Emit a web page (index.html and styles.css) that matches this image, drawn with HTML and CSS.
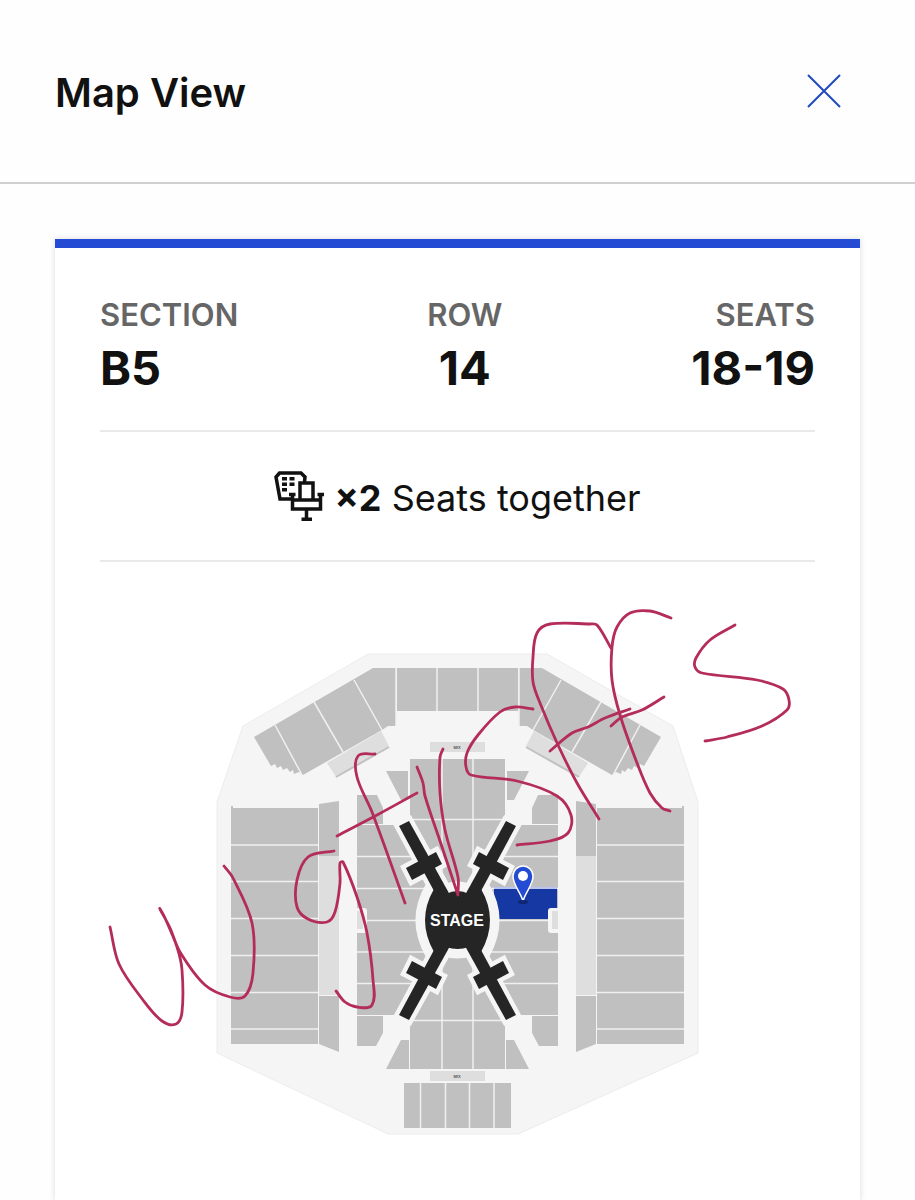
FILE: index.html
```
<!DOCTYPE html>
<html lang="en">
<head>
    <meta charset="utf-8">
    <title>Map View</title>
    <meta name="viewport" content="width=device-width,initial-scale=1">
    <link rel="stylesheet" href="styles.css">
</head>
<body>
    <header class="header">
        <h1>Map View</h1>
        <button class="close" type="button" aria-label="Close">
            <svg width="34" height="34" viewBox="0 0 34 34"><path d="M1 1L33 33M33 1L1 33"/></svg>
        </button>
    </header>
    <main class="main">
        <section class="card">
            <dl class="seat-info">
                <div class="item"><dt>SECTION</dt><dd>B5</dd></div>
                <div class="item center"><dt>ROW</dt><dd>14</dd></div>
                <div class="item right"><dt>SEATS</dt><dd>18-19</dd></div>
            </dl>
            <div class="together">
                <svg class="seat-icon" width="50" height="50" viewBox="0 0 50 50">
                    <path class="line" d="M17 28H6L2 6L5.500 2H27L31 6L30.500 11"/>
                    <path class="line" d="M26 29V12H39V29M18.500 23V38H46.500V23M18.500 29H46.500M32.500 38V49"/>
                    <path class="line" d="M15 23.500H21.500M43.500 23.500H50M27.500 48.300H38"/>
                    <path class="dots" d="M8 6h5v3.500h-5zM15.500 6h5v3.500h-5zM8 11.500h5v3.500h-5zM15.500 11.500h5v3.500h-5zM8 17h5v3.500h-5z"/>
                </svg>
                <span><b>×2</b> Seats together</span>
            </div>
            <svg class="map" viewBox="100 562 715 600">
                <defs>
                    <g id="side">
                        <!-- upper corner stand -->
                        <path class="block" d="M254 737L373 668H396V726H388L382 730L303 775L299 772L294 774L293 770L290 772L287 768L283 770L281 766L277 768L275 764L271 766Z"/>
                        <path class="gap" d="M275 725L302 775M314 702L343 752M354 680L382 730"/>
                        <path class="light" d="M327 763L381 731L389 746L336 777Z"/>
                        <path class="edge" d="M336 777L389 747"/>
                        <!-- side stand -->
                        <path class="block" d="M231 806H233V808H318V1044H231Z"/>
                        <path class="gap" d="M231 845H318M231 881.500H318M231 918.500H318M231 955.500H318M231 992.500H318M231 1029H318"/>
                        <path class="block" d="M319 804L339 801V856H319ZM319 996H339V1052L319 1044Z"/>
                        <path class="light" d="M319 856H339V995H319Z"/>
                        <!-- floor -->
                        <path class="block" d="M357 795H377L383 808V824H357ZM357 825H398L430 882V958L398 1015H357ZM357 1016H383V1033L376 1046H357Z"/>
                        <path class="gap" d="M357 856.500H430M357 888.500H430M357 920.500H430M357 952H430M357 983.500H430"/>
                        <path class="block" d="M386 771H408V800H401ZM401 1040H409V1069H386Z"/>
                    </g>
                    <g id="notch">
                        <path class="floor" d="M356 908H364Q367 908 367 911V930Q367 933 364 933H356Z"/>
                        <path class="light" d="M357 911H363V929H357Z"/>
                    </g>
                    <g id="arm">
                        <path d="M399 826L409 821L450 895L443 903L434 891Z"/>
                        <path d="M436 852L442 864L412 880L406 868Z"/>
                    </g>
                    <g id="arms">
                        <use href="#arm"/>
                        <use href="#arm" transform="translate(915 0) scale(-1 1)"/>
                        <use href="#arm" transform="translate(0 1841) scale(1 -1)"/>
                        <use href="#arm" transform="translate(915 1841) scale(-1 -1)"/>
                    </g>
                    <path id="core" d="M434 889Q416 920 434 952L446 947Q457.500 951 469 947L481 952Q499 920 481 889L469 894Q457.500 888 446 894Z"/>
                </defs>

                <path class="floor outline" d="M368 654H547L673 726L698 802V1053L518 1134H388L217 1053V802L243 726Z"/>
                <use href="#side"/>
                <use href="#side" transform="translate(915 0) scale(-1 1)"/>
                <path class="block" d="M397 668H518V711H397ZM404 1083H511V1128H404Z"/>
                <path class="gap" d="M396 668V726M437 668V711M478 668V711M519 668V726M420.500 1083V1128M445.500 1083V1128M469.500 1083V1128M494 1083V1128"/>
                <path class="block" d="M410 759H505V819L475 885H440L410 819ZM440 956H475L505 1021V1069H410V1021Z"/>
                <path class="gap" d="M442 759V885M473 759V885M410 819.500H505M442 956V1069M473 956V1069M410 1020.500H505"/>
                <path class="light" d="M430 742H485V752H430ZM430 1071H485V1081H430Z"/>
                <text class="mix" x="457" y="749">MIX</text>
                <text class="mix" x="457" y="1078">MIX</text>

                <path class="selected" d="M494 889H557V919H494Z"/>
                <path class="selected-edge" d="M494 888H557"/>
                <use href="#notch"/>
                <use href="#notch" transform="translate(915 0) scale(-1 1)"/>

                <use class="halo" href="#arms"/>
                <use class="halo core" href="#core"/>
                <use class="stage" href="#arms"/>
                <use class="stage" href="#core"/>
                <text class="stage-label" x="457" y="926">STAGE</text>

                <path class="pin" d="M523 901C520 891 513 885 513 876A10 10 0 0 1 533 876C533 885 526 891 523 901Z"/>
                <ellipse class="pin-shadow" cx="523" cy="902" rx="5" ry="2"/>
                <circle class="pin-dot" cx="523" cy="876" r="5"/>

                <g id="ink" class="ink"></g>
            </svg>
        </section>
    </main>
    <script src="ink.js"></script>
</body>
</html>
```
FILE: styles.css
```
*{
    box-sizing: border-box;
}
body{
    margin:0;
    min-height:100vh;
    display:flex;
    flex-direction: column;
    background-color: #fefefe;
    color:#111;
    font-family: Inter, "Open Sans", sans-serif;
}
.header{
    height:184px;
    padding:0 74px 0 55px;
    display:flex;
    align-items: center;
    justify-content: space-between;
    border-bottom:2px solid #d0d0d0;
}
h1{
    margin:0;
    padding-top:4px;
    font-size: 40px;
    line-height: 48px;
    font-weight: 600;
}
.close{
    display:flex;
    padding:0;
    border:none;
    background:none;
    cursor:pointer;
}
.close path{
    stroke:#2049bd;
    stroke-width:2;
}
.main{
    flex:1;
    display:flex;
    flex-direction: column;
    padding:55px 55px 0;
}
.card{
    flex:1;
    padding:0 45px;
    background-color: #fff;
    border-top:9px solid #234bd3;
    box-shadow: 0 0 6px rgba(0,0,0,0.14);
}
.seat-info{
    display:flex;
    justify-content: space-between;
    margin:0;
    padding:48px 0 34px;
    border-bottom:2px solid #e9e9e9;
}
.item{
    display:flex;
    flex-direction: column;
    gap:6px;
}
.center{
    text-align: center;
}
.right{
    text-align: right;
}
dt{
    color:#666;
    font-size: 31px;
    line-height: 38px;
    font-weight: 600;
}
dd{
    margin:0;
    font-size: 47px;
    line-height: 56px;
    font-weight: 700;
}
.together{
    height:130px;
    display:flex;
    align-items: center;
    justify-content: center;
    gap:10px;
    font-size: 36px;
    line-height: 44px;
    border-bottom:2px solid #e9e9e9;
}
.together span{
    padding-top:4px;
}
.seat-icon .line{
    fill:none;
    stroke:#111;
    stroke-width:3.5;
}
.seat-icon .dots{
    fill:#111;
}
.map{
    display:block;
    width:100%;
}
.floor{
    fill:#f5f5f5;
}
.outline{
    stroke:#ececec;
    stroke-width:1;
}
.block{
    fill:#c0c0c0;
}
.light{
    fill:#dedede;
}
.gap{
    fill:none;
    stroke:#f0f0f0;
    stroke-width:1.5;
}
.edge{
    stroke:#c0c0c0;
    stroke-width:2;
}
.mix{
    font:bold 4px "Liberation Sans", sans-serif;
    text-anchor:middle;
    fill:#555;
}
.selected{
    fill:#1538a3;
}
.selected-edge{
    stroke:#b9c5ee;
    stroke-width:2;
}
.halo{
    fill:#f5f5f5;
    stroke:#f5f5f5;
    stroke-width:9;
}
.halo.core{
    stroke-width:19;
    stroke-linejoin:round;
}
.stage{
    fill:#252525;
}
.stage-label{
    font:bold 16px "Liberation Sans", sans-serif;
    text-anchor:middle;
    fill:#fff;
}
.pin{
    fill:#234bd3;
    stroke:#fff;
    stroke-width:1.5;
}
.pin-dot{
    fill:#fff;
}
.pin-shadow{
    fill:#0e2673;
}
.ink path{
    fill:none;
    stroke:#b42c5a;
    stroke-width:2.8;
    stroke-linecap:round;
    stroke-linejoin:round;
}
```
FILE: ink.js
```
// pen strokes, x y pairs in map coordinates
const strokes = [
    [110,927, 119,964, 143,1000, 162,1021, 176,1024, 182,1012, 182,970, 177,947, 165,918, 160,909, 170,928, 180,952, 205,985, 230,997, 245,996, 253,973, 252,923, 233,878, 224,866],
    [334,851, 308,857, 297,880, 297,907, 308,919, 327,922, 335,912, 340,883, 340,863, 343,862, 357,897, 367,933, 373,980, 372,1005, 357,1007, 345,1002, 336,991],
    [375,754, 358,756, 357,777, 372,812, 405,903],
    [337,836, 377,815, 417,793],
    [417,767, 423,783, 425,796, 441,844, 458,895],
    [458,893, 458,877, 445,830, 440,793, 440,757, 443,749],
    [533,709, 515,707, 500,712, 478,735, 467,753, 466,767, 471,775, 517,781, 557,796, 571,815, 568,833, 550,841, 517,845],
    [611,648, 597,625, 590,624, 550,624, 537,633, 533,657, 533,682, 540,703, 558,745, 577,783, 599,819],
    [550,751, 572,733, 588,727, 605,718, 630,709],
    [671,618, 650,611, 630,613, 617,627, 612,647, 612,680, 620,715, 637,763, 650,793, 662,808, 670,811],
    [611,726, 622,717, 642,710, 664,697],
    [735,625, 710,640, 696,658, 695,667, 702,673, 757,680, 783,689, 789,700, 787,710, 762,726, 727,737, 705,741]
];
const ink = document.getElementById("ink");

// smooth curve through all the points of a stroke
function curve(s){
    const p = [];
    for(let i = 0; i < s.length; i += 2) p.push([s[i], s[i+1]]);
    let d = "M" + p[0];
    for(let i = 0; i < p.length - 1; i++){
        const a = p[i-1] || p[i], b = p[i], c = p[i+1], e = p[i+2] || c;
        // handles stay short between close points
        const len = Math.hypot(c[0]-b[0], c[1]-b[1]);
        const h1 = Math.min(len / 3 / (Math.hypot(c[0]-a[0], c[1]-a[1]) || 1), 1);
        const h2 = Math.min(len / 3 / (Math.hypot(e[0]-b[0], e[1]-b[1]) || 1), 1);
        d += "C" + [b[0]+(c[0]-a[0])*h1, b[1]+(c[1]-a[1])*h1, c[0]-(e[0]-b[0])*h2, c[1]-(e[1]-b[1])*h2, c[0], c[1]];
    }
    return d;
}

strokes.forEach(s => {
    const path = document.createElementNS("http://www.w3.org/2000/svg", "path");
    path.setAttribute("d", curve(s));
    ink.appendChild(path);
});
```
